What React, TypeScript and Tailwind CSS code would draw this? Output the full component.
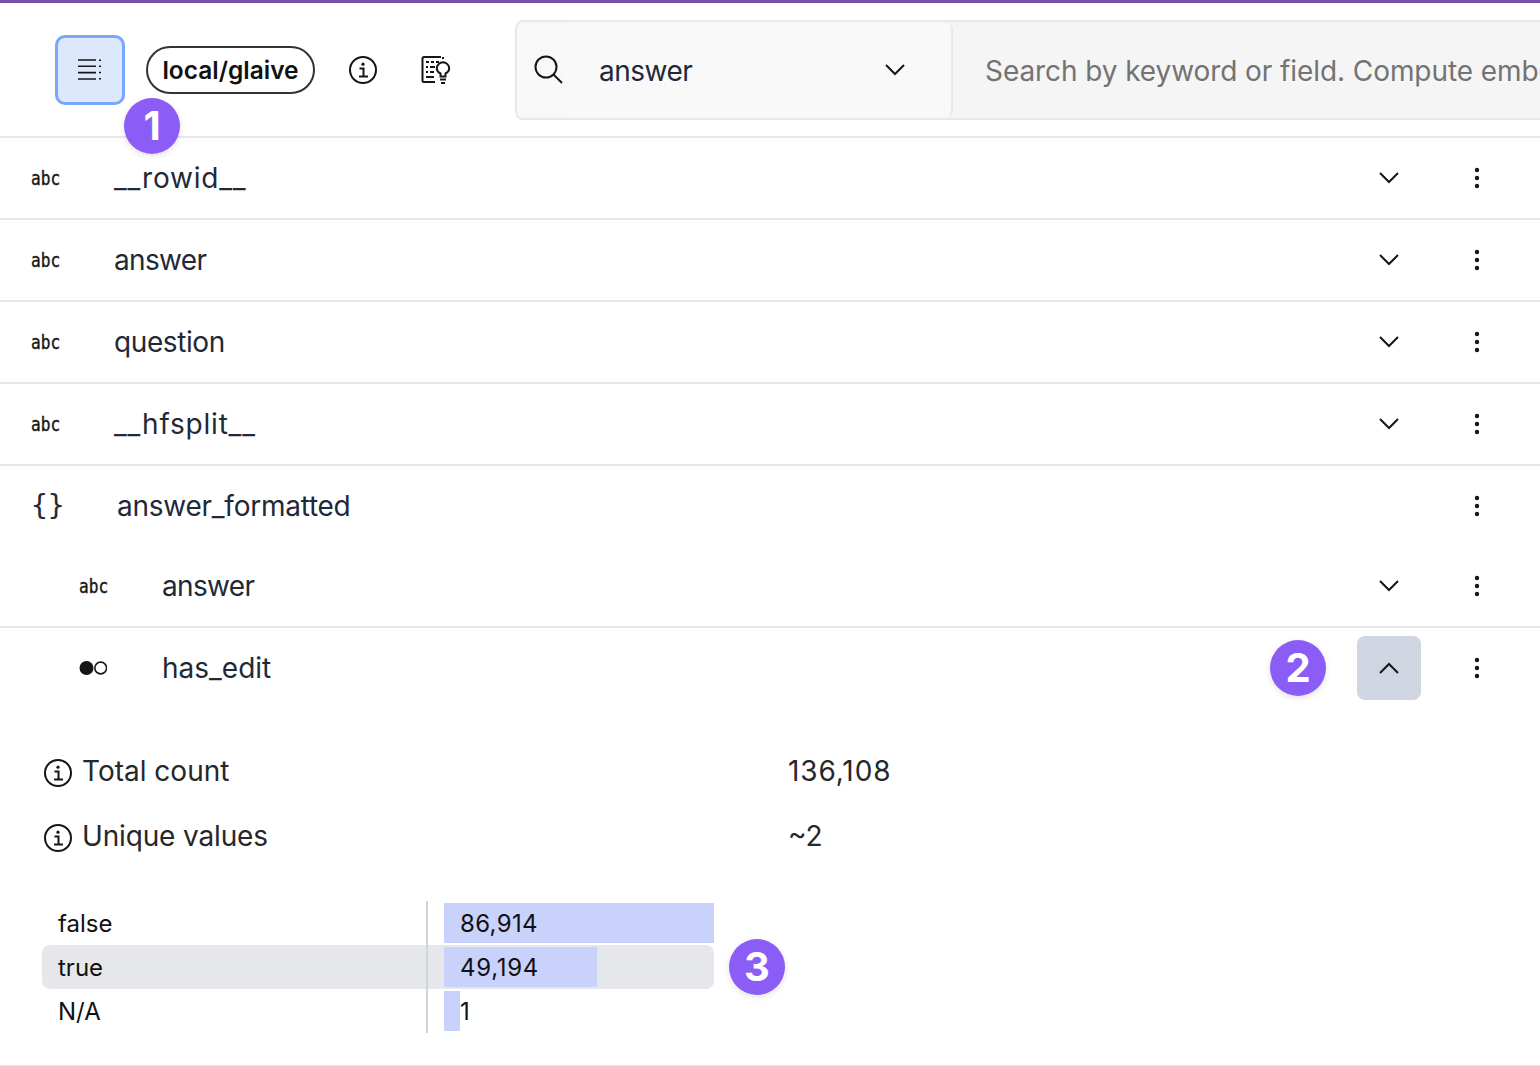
import type { ReactNode } from "react"

const font = { fontFamily: "Inter, 'Noto Sans', sans-serif" }

function Badge({ n, className }: { n: number; className: string }) {
  return (
    <div className={"absolute w-[56px] h-[56px] rounded-full bg-[#8b5cf6] text-white font-bold text-[40px] leading-none flex items-center justify-center shadow-[0_2px_6px_rgba(0,0,0,0.12)] " + className}>
      {n}
    </div>
  )
}

function Chevron({ up }: { up?: boolean }) {
  return (
    <svg width="20" height="12" viewBox="0 0 20 12" fill="none" stroke="#161616" strokeWidth="2">
      <path d={up ? "M1 11 L10 2 L19 11" : "M1 1 L10 10 L19 1"} />
    </svg>
  )
}

function Dots() {
  return (
    <svg width="6" height="22" viewBox="0 0 6 22" fill="#161616">
      <circle cx="3" cy="3" r="2.2" />
      <circle cx="3" cy="11" r="2.2" />
      <circle cx="3" cy="19" r="2.2" />
    </svg>
  )
}

function InfoIcon({ className }: { className?: string }) {
  return (
    <svg className={className} width="28" height="28" viewBox="0 0 28 28" fill="none" stroke="#161616" strokeWidth="2">
      <circle cx="14" cy="14" r="13" />
      <path d="M10.5 12.5 H14.5 V20.5 M10 20.5 H19" />
      <circle cx="14" cy="8.2" r="1.6" fill="#161616" stroke="none" />
    </svg>
  )
}

function Abc() {
  return (
    <span className="text-[19px] leading-none text-[#161616] origin-left scale-x-[0.85] inline-block [-webkit-text-stroke:0.4px_#161616]" style={{ fontFamily: "'DejaVu Sans Mono', monospace" }}>
      abc
    </span>
  )
}

function Row({ icon, name, tracking = "", indent, chevron = true, border = true, nameX, height = "h-[82px]" }: {
  icon: ReactNode
  name: string
  tracking?: string
  indent?: boolean
  chevron?: boolean
  border?: boolean
  nameX?: string
  height?: string
}) {
  return (
    <div className={"flex items-center " + height + " " + (border ? "border-b-2 border-[#e5e7eb] " : "") + (indent ? "pl-[79px]" : "pl-[31px]")}>
      <div className={"flex items-center shrink-0 " + (nameX ?? "w-[83px]")}>{icon}</div>
      <div className={"flex-1 text-[28px] text-[#1f2937] " + tracking}>{name}</div>
      <div className="w-[64px] flex justify-center">{chevron && <Chevron />}</div>
      <div className="w-[24px] ml-[44px] mr-[51px] flex justify-center"><Dots /></div>
    </div>
  )
}

export default function App() {
  return (
    <div className="relative w-[1540px] h-[1066px] overflow-hidden bg-white" style={font}>
      <div className="h-[3px] bg-[#7a4fa6]" />

      {/* header */}
      <div className="flex items-center h-[135px] border-b-2 border-[#e8e8ec] pl-[55px]">
        <button className="w-[70px] h-[70px] rounded-[10px] border-[3px] border-[#76a9fa] bg-[#dde8fc] flex items-center justify-center">
          <svg width="24" height="21" viewBox="0 0 24 21" fill="none" stroke="#161616" strokeWidth="1.6">
            <path d="M0 1 H18 M0 7.3 H18 M0 13.6 H18 M0 20 H18" />
            <path d="M22 0.5 V2 M22 6.5 V8 M22 12.8 V14.3 M22 19 V20.5" strokeWidth="2" />
          </svg>
        </button>
        <div className="ml-[21px] w-[169px] h-[48px] rounded-full border-2 border-[#333333] flex items-center justify-center text-[24.5px] font-semibold text-[#111111]">
          <span className="translate-y-[1px]">local/glaive</span>
        </div>
        <InfoIcon className="ml-[34px]" />
        <div className="ml-[44px]">
          <svg width="30" height="30" viewBox="0 0 30 30" fill="none" stroke="#161616" strokeWidth="2">
            <path d="M20 2 H3 Q1.5 2 1.5 3.5 V25.5 Q1.5 27 3 27 H14" />
            <path d="M22 2 V4" />
            <path d="M5 7 H8 M10 7 H13 M15 7 H18 M5 12 H7 M9 12 H14 M5 17 H7 M9 17 H13 M5 22 H13" />
            <path d="M19.5 21.5 V18.5 Q15.8 16.5 15.8 13.5 A6.2 6.2 0 0 1 28.2 13.5 Q28.2 16.5 24.5 18.5 V21.5 Z" />
            <path d="M19 24.5 H25 M20 28 H24" />
          </svg>
        </div>
        <div className="ml-[64px] flex h-[100px] flex-1 mr-[-2px] border-y-2 border-[#e8e8ec] bg-[#f5f5f5] min-w-0 rounded-l-[8px]">
          <div className="w-[438px] shrink-0 flex bg-[#f9f9f9] border-x-2 border-[#e8e8ec] rounded-[8px]">
            <div className="w-[50px] shrink-0 flex items-center pl-[17px] bg-[#f8f8f8] rounded-l-[8px]">
              <svg className="shrink-0" width="30" height="30" viewBox="0 0 30 30" fill="none" stroke="#161616" strokeWidth="2">
                <circle cx="12" cy="12" r="10.5" />
                <path d="M19.5 19.5 L28 28" />
              </svg>
            </div>
            <div className="flex-1 flex items-center pl-[32px]">
              <span className="flex-1 text-[28px] text-[#1f2937] tracking-[-0.5px] translate-y-[1px]">answer</span>
              <div className="mr-[46px]"><Chevron /></div>
            </div>
          </div>
          <div className="pl-[32px] flex items-center text-[28px] text-[#737373] tracking-[-0.08px] whitespace-nowrap overflow-hidden translate-y-[1px]">
            Search by keyword or field. Compute embeddings to search by concept.
          </div>
        </div>
      </div>

      <Row icon={<Abc />} name="__rowid__" tracking="tracking-[0.8px]" />
      <Row icon={<Abc />} name="answer" tracking="tracking-[-0.65px]" />
      <Row icon={<Abc />} name="question" tracking="tracking-[-0.4px]" />
      <Row icon={<Abc />} name="__hfsplit__" tracking="tracking-[0.8px]" />

      <Row
        icon={<span className="text-[28px] leading-none text-[#1f2937]" style={{ fontFamily: "'DejaVu Sans Mono', monospace" }}>{"{}"}</span>}
        name="answer_formatted"
        tracking="tracking-[-0.25px]"
        chevron={false}
        border={false}
        nameX="w-[86px]"
        height="h-[80px]"
      />
      <Row icon={<Abc />} name="answer" tracking="tracking-[-0.65px]" indent />

      <Row
        icon={
          <svg width="28" height="16" viewBox="0 0 28 16">
            <circle cx="7.5" cy="8" r="7" fill="#161616" />
            <circle cx="21.7" cy="8" r="5.9" fill="white" stroke="#161616" strokeWidth="1.6" />
          </svg>
        }
        name="has_edit"
        indent
        chevron={false}
        border={false}
        height="h-[80px]"
      />

      {/* stats */}
      <div className="pl-[44px] pt-[30px]">
        <div className="flex items-center h-[65px]">
          <div className="w-[744px] flex items-center gap-[10px] text-[28px] text-[#27272a]"><InfoIcon className="mt-[4px]" />Total count</div>
          <div className="text-[28px] text-[#27272a] tracking-[0.9px]">136,108</div>
        </div>
        <div className="flex items-center h-[65px]">
          <div className="w-[744px] flex items-center gap-[10px] text-[28px] text-[#27272a] tracking-[-0.15px]"><InfoIcon className="mt-[4px]" />Unique values</div>
          <div className="text-[28px] text-[#27272a]">~2</div>
        </div>
      </div>

      {/* histogram */}
      <div className="ml-[42px] mt-[33px] w-[672px] text-[24px] text-[#111111]">
        {[
          { label: "false", value: "86,914", width: "w-[270px]", tracking: "tracking-[0.35px]", active: false },
          { label: "true", value: "49,194", width: "w-[153px]", tracking: "tracking-[0.7px]", active: true },
          { label: "N/A", value: "1", width: "w-[16px]", tracking: "", active: false },
        ].map((row) => (
          <div key={row.label} className={"flex h-[44px] rounded-[8px] " + (row.active ? "bg-[#e5e7eb]" : "")}>
            <div className="w-[384px] pl-[16px] flex items-center"><span className="translate-y-[1px]">{row.label}</span></div>
            <div className="w-[2px] bg-[#d1d5db]" />
            <div className="relative ml-[16px] flex-1 flex items-center pl-[16px]">
              <div className={"absolute left-0 top-[2px] bottom-[2px] bg-[#c9d2fb] " + row.width} />
              <span className={"relative translate-y-[1px] " + row.tracking}>{row.value}</span>
            </div>
          </div>
        ))}
      </div>
      <div className="mt-[32px] h-[2px] bg-[#e5e7eb]" />

      <Badge n={1} className="left-[124px] top-[98px]" />
      <Badge n={2} className="left-[1270px] top-[640px]" />
      <Badge n={3} className="left-[729px] top-[939px]" />
      <div className="absolute left-[1357px] top-[636px] w-[64px] h-[64px] rounded-[8px] bg-[#cfd6e1] flex items-center justify-center">
        <Chevron up />
      </div>
    </div>
  )
}
